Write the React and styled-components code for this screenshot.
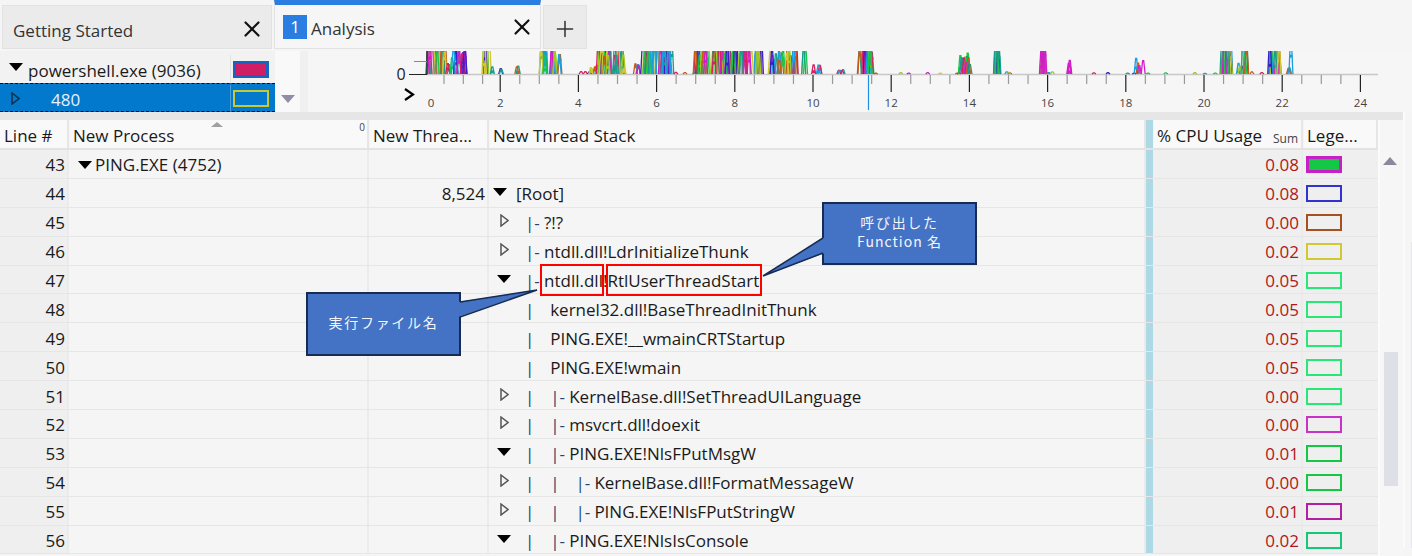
import styled, { createGlobalStyle } from 'styled-components'
import { X, Plus } from 'lucide-react'

const GlobalStyle = createGlobalStyle`
  html, body {
    margin: 0;
    padding: 0;
    height: 556px;
    overflow: hidden;
    background: #f5f5f5;
  }
`

const Page = styled.div`
  width: 1412px;
  height: 556px;
  overflow: hidden;
  background: #f5f5f5;
  font-family: 'Open Sans', 'Noto Sans', sans-serif;
  font-size: 17px;
  color: #1a1a1a;
`

const TabBar = styled.div`
  display: flex;
  height: 51px;
  padding-left: 2px;
  gap: 2px;
  align-items: flex-end;
  box-sizing: border-box;
  padding-bottom: 2px;
`

const Tab = styled.div`
  display: flex;
  align-items: center;
  box-sizing: border-box;
  width: ${(p) => p.$width}px;
  height: ${(p) => (p.$active ? 49 : 44)}px;
  padding: ${(p) => p.$padding};
  background: ${(p) => (p.$active ? '#f6f6f6' : '#ebebeb')};
  border: 1px solid #e2e2e2;
  border-top: ${(p) => (p.$active ? '5px solid #2a7de1' : '1px solid #e2e2e2')};
  justify-content: ${(p) => (p.$center ? 'center' : 'flex-start')};
`

const TabTitle = styled.span`
  flex: 1;
  padding-top: 3px;
  white-space: nowrap;
  color: #333;
`

const TabNumber = styled.span`
  display: flex;
  align-items: center;
  justify-content: center;
  width: 24px;
  height: 24px;
  margin-right: 4px;
  background: #2a7de1;
  color: #fff;
`

const GraphRow = styled.div`
  display: flex;
  height: 61px;
`

const GraphList = styled.div`
  width: 275px;
  display: flex;
  flex-direction: column;
`

const GraphItem = styled.div`
  display: grid;
  grid-template-columns: 231px 44px;
  height: ${(p) => p.$height}px;
  padding-top: ${(p) => p.$top}px;
  box-sizing: border-box;
  align-items: center;
  background: ${(p) => (p.$selected ? '#0279cc' : '#f2f2f2')};
  color: ${(p) => (p.$selected ? '#e8f2fa' : '#1a1a1a')};
  border-top: ${(p) => (p.$selected ? '1px dashed #111' : 'none')};
  border-bottom: ${(p) => (p.$selected ? '1px dashed #111' : 'none')};
`

const GraphLabel = styled.div`
  display: flex;
  align-items: center;
  align-self: stretch;
  padding-left: ${(p) => p.$indent}px;
  gap: ${(p) => p.$gap}px;
  white-space: nowrap;
  border-right: 1px solid ${(p) => p.$line};
`

const GraphText = styled.span`
  margin-top: 3px;
`

const GraphSwatch = styled.div`
  justify-self: end;
  width: 36px;
  height: 17px;
  margin-right: 6px;
  box-sizing: border-box;
  border: ${(p) => p.$borderWidth}px solid ${(p) => p.$border};
  background: ${(p) => p.$fill};
`

const GraphScroll = styled.div`
  width: 25px;
  background: #f9f9f9;
  display: flex;
  align-items: flex-end;
  justify-content: center;
  padding-bottom: 9px;
  box-sizing: border-box;
`

const GraphDivider = styled.div`
  width: 8px;
  background: #f0f0f0;
`

const ChartPanel = styled.div`
  flex: 1;
  background: #f6f6f6;
`

const Band = styled.div`
  height: 8px;
  width: 1403px;
  background: #e6e6e6;
`

const Body = styled.div`
  display: flex;
`

const TableWrap = styled.div`
  width: 1378px;
`

const columns = '69px 300px 120px 657px 7px 150px 75px'

const HeaderRow = styled.div`
  display: grid;
  grid-template-columns: ${columns};
  height: 30px;
  box-sizing: border-box;
  border-bottom: 2px solid #e3e3e3;
`

const HeaderCell = styled.div`
  position: relative;
  display: flex;
  align-items: center;
  box-sizing: border-box;
  padding: 3px 0 0 ${(p) => (p.$first ? 4 : 3)}px;
  margin-left: ${(p) => (p.$first ? 0 : 1)}px;
  background: #f9f9f9;
  border-right: 2px solid #e6e6e6;
  white-space: nowrap;
  overflow: hidden;
`

const SortMark = styled.span`
  position: absolute;
  left: 141px;
  top: 2px;
  width: 0;
  height: 0;
  border-left: 6px solid transparent;
  border-right: 6px solid transparent;
  border-bottom: 5px solid #a0a0a0;
`

const TinyMark = styled.span`
  position: absolute;
  right: ${(p) => p.$right}px;
  top: ${(p) => p.$top}px;
  font-size: ${(p) => p.$size}px;
  color: #444;
`

const Splitter = styled.div`
  background: #add8e6;
`

const Row = styled.div`
  display: grid;
  grid-template-columns: ${columns};
  height: 28.9px;
  box-sizing: border-box;
  border-bottom: 1px solid #e6e6e6;
`

const Cell = styled.div`
  display: flex;
  align-items: center;
  min-width: 0;
  box-sizing: border-box;
  white-space: nowrap;
  justify-content: ${(p) => (p.$right ? 'flex-end' : 'flex-start')};
  padding-top: 2px;
  padding-right: ${(p) => (p.$right ? p.$pad || 0 : 0)}px;
  background: ${(p) => (p.$shade ? '#efefef' : '#f5f5f5')};
  border-right: 2px solid #ebebeb;
  color: ${(p) => p.$color || 'inherit'};
`

const ProcessName = styled.span`
  margin-left: 3px;
`

const ProcessCell = styled(Cell)`
  padding-left: 9px;
`

const TreeCell = styled(Cell)`
  padding-left: 0;
  overflow: visible;
`

const Expander = styled.span`
  display: flex;
  justify-content: center;
  align-items: center;
  flex: none;
  width: ${(p) => (p.$root ? 27 : 36)}px;
  padding: ${(p) => (p.$root ? '0 9px 0 3px' : '0 6px 0 0')};
  box-sizing: border-box;
  margin-top: -4px;
`

const Pipe = styled.span`
  flex: none;
  width: 25.2px;
  color: #24476f;
`

const Branch = styled.span`
  flex: none;
  width: 19px;
  color: #24476f;
`

const LegendCell = styled(Cell)`
  padding-left: 3px;
  border-right: none;
`

const LegendSwatch = styled.span`
  display: block;
  box-sizing: border-box;
  width: 36px;
  height: 17px;
  background: ${(p) => p.$fill || 'transparent'};
  border: ${(p) => (p.$fill ? 3 : 2)}px solid ${(p) => p.$border};
`

const ScrollBar = styled.div`
  position: relative;
  width: 25px;
  height: 436px;
  background: #f6f6f6;
  border-left: 2px solid #fbfbfb;
  box-sizing: border-box;
`

const ScrollUp = styled.span`
  position: absolute;
  left: 3px;
  top: 37px;
  width: 0;
  height: 0;
  border-left: 7px solid transparent;
  border-right: 7px solid transparent;
  border-bottom: 8px solid #8a8a9e;
`

const ScrollThumb = styled.span`
  position: absolute;
  left: 4px;
  top: 232px;
  width: 14px;
  height: 134px;
  background: #dfdfe8;
`

const RightStrip = styled.div`
  width: 9px;
  height: 436px;
  box-sizing: border-box;
  padding: 130px 0 0 6px;
  border-left: 2px solid #fbfbfb;
  margin-top: -8px;
`

const RightThumb = styled.div`
  height: 100%;
  background: #e6e6ec;
`

const Overlay = styled.div`
  position: absolute;
  inset: 0;
  pointer-events: none;
`

const TailLayer = styled.svg`
  position: absolute;
  left: 0;
  top: 0;
`

const Callout = styled.div`
  position: absolute;
  left: ${(p) => p.$left}px;
  top: ${(p) => p.$top}px;
  width: 155px;
  height: ${(p) => p.$height}px;
  box-sizing: border-box;
  border: 2px solid #172c51;
  padding-bottom: 3px;
  background: #4472c4;
  color: #f2f5fb;
  display: flex;
  flex-direction: column;
  align-items: center;
  justify-content: center;
  font-family: 'Noto Sans CJK JP', 'Noto Sans', sans-serif;
  font-size: 14px;
  line-height: 19px;
`

const CalloutLine = styled.span`
  letter-spacing: ${(p) => p.$spacing}px;
`

const RedBox = styled.div`
  position: absolute;
  left: ${(p) => p.$left}px;
  top: 264px;
  width: ${(p) => p.$width}px;
  height: 32px;
  box-sizing: border-box;
  border: 2px solid #ff0000;
`

const Root = styled.div`
  position: relative;
`

// little triangles used by the tree
const Down = ({ color = '#000', className }) => (
  <svg className={className} width="14" height="8" viewBox="0 0 14 8"><path d="M0 0H14L7 8Z" fill={color} /></svg>
)

const Hollow = ({ color = '#555', className }) => (
  <svg className={className} width="9" height="13" viewBox="0 0 9 13">
    <path d="M1 1L8 6.5L1 12Z" fill="none" stroke={color} strokeWidth="1.5" />
  </svg>
)

const RaisedDown = styled(Down)`
  margin-top: -4px;
`

const sparkColors = ['#14c846', '#d21ec8', '#d81f5f', '#1a9fe0', '#a0c81e', '#3a1ec8', '#c85a14', '#14a08c', '#d2c832']

// [start px, end px, spikes, peak]
const clusters = [
  [428, 446, 18, 1.5], [446, 452, 2, 0.5], [452, 466, 14, 1.2], [484, 490, 6, 1.6], [490, 494, 1, 0.3],
  [500, 504, 2, 0.2], [516, 520, 2, 0.3], [541, 546, 6, 1.4], [551, 557, 7, 1.5], [558, 560, 2, 1.3],
  [572, 590, 3, 0.1], [590, 602, 5, 0.35], [598, 624, 24, 1.3], [624, 640, 5, 0.4], [640, 672, 32, 1.5],
  [675, 700, 4, 0.1], [694, 712, 14, 1.3], [712, 762, 54, 1.5], [770, 800, 18, 0.9], [780, 800, 6, 1.4],
  [803, 806, 3, 1.4], [812, 820, 3, 0.55], [838, 852, 4, 0.16], [858, 872, 16, 1.5], [872, 960, 7, 0.05],
  [960, 968, 7, 0.85], [966, 970, 3, 0.6], [995, 1000, 7, 1.5], [1003, 1030, 3, 0.08], [1041, 1046, 7, 1.5],
  [1046, 1062, 3, 0.08], [1066, 1070, 3, 0.5], [1070, 1136, 4, 0.05], [1136, 1144, 4, 0.6], [1144, 1222, 5, 0.05],
  [1222, 1232, 16, 1.5], [1236, 1242, 3, 0.5], [1243, 1249, 7, 1.5], [1249, 1268, 2, 0.08], [1269, 1280, 16, 1.5],
  [1285, 1290, 2, 0.25], [1290, 1291, 1, 1.5],
]

const buildSpikes = () => {
  let seed = 11
  const rand = () => {
    seed = (seed * 16807) % 2147483647
    return seed / 2147483647
  }
  const out = []
  clusters.forEach(([a, b, count, peak]) => {
    for (let i = 0; i < count; i++) {
      const x = a + rand() * (b - a)
      const h = 24 * peak * (0.55 + rand() * 0.6)
      const color = sparkColors[Math.floor(rand() * sparkColors.length)]
      out.push({ x, h, color, dot: h > 5 && rand() > 0.45, dotAt: 0.3 + rand() * 0.6 })
    }
  })
  return out
}

const spikes = buildSpikes()
const CHART_LEFT = 308

const tickX = (t) => (t < 4 ? 444 + (t - 1) * 19.3 : 422 + t * 19.55)

const Chart = () => {
  const left = (x) => x - CHART_LEFT
  const ticks = []
  for (let i = 1; i <= 48; i++) ticks.push(i)
  return (
    <svg width="1104" height="61" viewBox="0 0 1104 61" style={{ display: 'block' }}>
      <defs>
        <clipPath id="plot"><rect x="0" y="0" width="1104" height="24" /></clipPath>
      </defs>
      <path d={`M${left(427)} 23.5H${left(1378)}`} stroke="#c8c8c8" fill="none" strokeWidth="1.5" />
      <g clipPath="url(#plot)">
        {spikes.map((s, i) => (
          <g key={i}>
            <path
              d={`M${left(s.x) - 2} 23L${left(s.x) - 0.5} ${23 - s.h}H${left(s.x) + 0.5}L${left(s.x) + 2} 23`}
              fill="none"
              stroke={s.color}
              strokeWidth="1.3"
            />
            {s.dot && <rect x={left(s.x) - 1.5} y={23 - s.h * s.dotAt} width="3" height="3" fill={s.color} />}
          </g>
        ))}
      </g>
      <path d={`M${left(409)} 23.5H${left(427)}M${left(427)} 0V23.5`} stroke="#222" fill="none" strokeWidth="1.2" />
      <path d={`M${left(414)} 10.5H${left(427)}`} stroke="#888" fill="none" />
      {ticks.map((t) => {
        const x = left(tickX(t))
        const major = t % 4 === 0
        return <path key={t} d={`M${x} 24V${major ? 41 : 33}`} stroke={major ? '#222' : '#999'} strokeWidth="1.2" />
      })}
      <path d={`M${left(868.5)} 24V59`} stroke="#1e8fe6" strokeWidth="1.2" />
      <path d={`M${left(405)} 38L${left(413)} 43.5L${left(405)} 49`} fill="none" stroke="#000" strokeWidth="2.2" />
      <text x={left(401)} y="29" fontSize="16" textAnchor="middle" fill="#222" fontFamily="Open Sans">0</text>
      {[0, 2, 4, 6, 8, 10, 12, 14, 16, 18, 20, 22, 24].map((n) => (
        <text
          key={n}
          x={n === 0 ? left(431) : left(422 + n * 39.1)}
          y="56"
          fontSize="11.5"
          textAnchor="middle"
          fill="#444"
          fontFamily="Open Sans"
        >
          {n}
        </text>
      ))}
    </svg>
  )
}

const rows = [
  { line: 43, process: 'PING.EXE (4752)', cpu: '0.08', border: '#c81ec8', fill: '#14c846' },
  { line: 44, thread: '8,524', root: true, exp: 'down', text: '[Root]', cpu: '0.08', border: '#3232d2' },
  { line: 45, exp: 'right', pipes: 0, branch: true, text: '?!?', cpu: '0.00', border: '#a5501e' },
  { line: 46, exp: 'right', pipes: 0, branch: true, text: 'ntdll.dll!LdrInitializeThunk', cpu: '0.02', border: '#d2c832' },
  { line: 47, exp: 'down', pipes: 0, branch: true, text: 'ntdll.dll!RtlUserThreadStart', cpu: '0.05', border: '#28e678' },
  { line: 48, pipes: 1, text: 'kernel32.dll!BaseThreadInitThunk', cpu: '0.05', border: '#28e678' },
  { line: 49, pipes: 1, text: 'PING.EXE!__wmainCRTStartup', cpu: '0.05', border: '#28e678' },
  { line: 50, pipes: 1, text: 'PING.EXE!wmain', cpu: '0.05', border: '#28e678' },
  { line: 51, exp: 'right', pipes: 1, branch: true, text: 'KernelBase.dll!SetThreadUILanguage', cpu: '0.00', border: '#28e678' },
  { line: 52, exp: 'right', pipes: 1, branch: true, text: 'msvcrt.dll!doexit', cpu: '0.00', border: '#c832c8' },
  { line: 53, exp: 'down', pipes: 1, branch: true, text: 'PING.EXE!NlsFPutMsgW', cpu: '0.01', border: '#14c846' },
  { line: 54, exp: 'right', pipes: 2, branch: true, text: 'KernelBase.dll!FormatMessageW', cpu: '0.00', border: '#14c846' },
  { line: 55, exp: 'right', pipes: 2, branch: true, text: 'PING.EXE!NlsFPutStringW', cpu: '0.01', border: '#b41ea0' },
  { line: 56, exp: 'down', pipes: 1, branch: true, text: 'PING.EXE!NlsIsConsole', cpu: '0.02', border: '#14c878' },
]

const TreeLabel = ({ row }) => {
  if (!row.text) return null
  const pipes = []
  for (let i = 0; i < (row.pipes || 0); i++) pipes.push(<Pipe key={i}>|</Pipe>)
  return (
    <>
      <Expander $root={row.root}>
        {row.exp === 'down' && <Down />}
        {row.exp === 'right' && <Hollow />}
      </Expander>
      {pipes}
      {row.branch && <Branch>|-</Branch>}
      <span>{row.text}</span>
    </>
  )
}

const App = () => {
  return (
    <Page>
      <GlobalStyle />
      <Root>
        <TabBar>
          <Tab $width={270} $padding="3px 6px 0 10px">
            <TabTitle>Getting Started</TabTitle>
            <X size={26} strokeWidth={2} color="#111" />
          </Tab>
          <Tab $width={267} $active $padding="0 5px 0 8px">
            <TabNumber>1</TabNumber>
            <TabTitle>Analysis</TabTitle>
            <X size={26} strokeWidth={2} color="#111" />
          </Tab>
          <Tab $width={44} $center $padding="4px 0 0 0">
            <Plus size={26} strokeWidth={1.4} color="#333" />
          </Tab>
        </TabBar>
        <GraphRow>
          <GraphList>
            <GraphItem $height={32} $top={4}>
              <GraphLabel $indent={9} $gap={5} $line="#e4e4e4">
                <RaisedDown />
                <GraphText>powershell.exe (9036)</GraphText>
              </GraphLabel>
              <GraphSwatch $border="#1565c0" $borderWidth={3} $fill="#d01e64" />
            </GraphItem>
            <GraphItem $height={29} $top={1} $selected>
              <GraphLabel $indent={11} $gap={31} $line="#4a9bd6">
                <Hollow color="#10304a" />
                <GraphText>480</GraphText>
              </GraphLabel>
              <GraphSwatch $border="#c8c832" $borderWidth={2} $fill="transparent" />
            </GraphItem>
          </GraphList>
          <GraphScroll>
            <Down color="#8f8fa3" />
          </GraphScroll>
          <GraphDivider />
          <ChartPanel>
            <Chart />
          </ChartPanel>
        </GraphRow>
        <Band />
        <Body>
          <TableWrap>
            <HeaderRow>
              <HeaderCell $first>Line #</HeaderCell>
              <HeaderCell>
                New Process
                <SortMark />
                <TinyMark $right={2} $top={0} $size={10}>0</TinyMark>
              </HeaderCell>
              <HeaderCell>New Threa...</HeaderCell>
              <HeaderCell>New Thread Stack</HeaderCell>
              <Splitter />
              <HeaderCell>
                % CPU Usage
                <TinyMark $right={3} $top={10} $size={12}>Sum</TinyMark>
              </HeaderCell>
              <HeaderCell>Lege...</HeaderCell>
            </HeaderRow>
            {rows.map((row) => (
              <Row key={row.line}>
                <Cell $right $shade $pad={2}>{row.line}</Cell>
                <ProcessCell>
                  {row.process && (
                    <>
                      <Down />
                      <ProcessName>{row.process}</ProcessName>
                    </>
                  )}
                </ProcessCell>
                <Cell $right $pad={2}>{row.thread}</Cell>
                <TreeCell><TreeLabel row={row} /></TreeCell>
                <Splitter />
                <Cell $right $shade $pad={2} $color="#b01818">{row.cpu}</Cell>
                <LegendCell $shade>
                  <LegendSwatch $border={row.border} $fill={row.fill} />
                </LegendCell>
              </Row>
            ))}
          </TableWrap>
          <ScrollBar>
            <ScrollUp />
            <ScrollThumb />
          </ScrollBar>
          <RightStrip>
            <RightThumb />
          </RightStrip>
        </Body>
        <Overlay>
          <RedBox $left={540} $width={64} />
          <RedBox $left={606} $width={156} />
          <Callout $left={822} $top={202} $height={63}>
            <CalloutLine $spacing={1.7}>呼び出した</CalloutLine>
            <CalloutLine $spacing={1}>Function 名</CalloutLine>
          </Callout>
          <Callout $left={306} $top={292} $height={64}>
            <CalloutLine $spacing={1.7}>実行ファイル名</CalloutLine>
          </Callout>
          <TailLayer width="1412" height="556">
            <path d="M825 237L763 276L825 253Z" fill="#4472c4" />
            <path d="M823 238L763 276L823 253" fill="none" stroke="#172c51" strokeWidth="1.5" />
            <path d="M458 302L537 290L458 317Z" fill="#4472c4" />
            <path d="M460 302L537 290L460 317" fill="none" stroke="#172c51" strokeWidth="1.5" />
          </TailLayer>
        </Overlay>
      </Root>
    </Page>
  )
}

export default App
